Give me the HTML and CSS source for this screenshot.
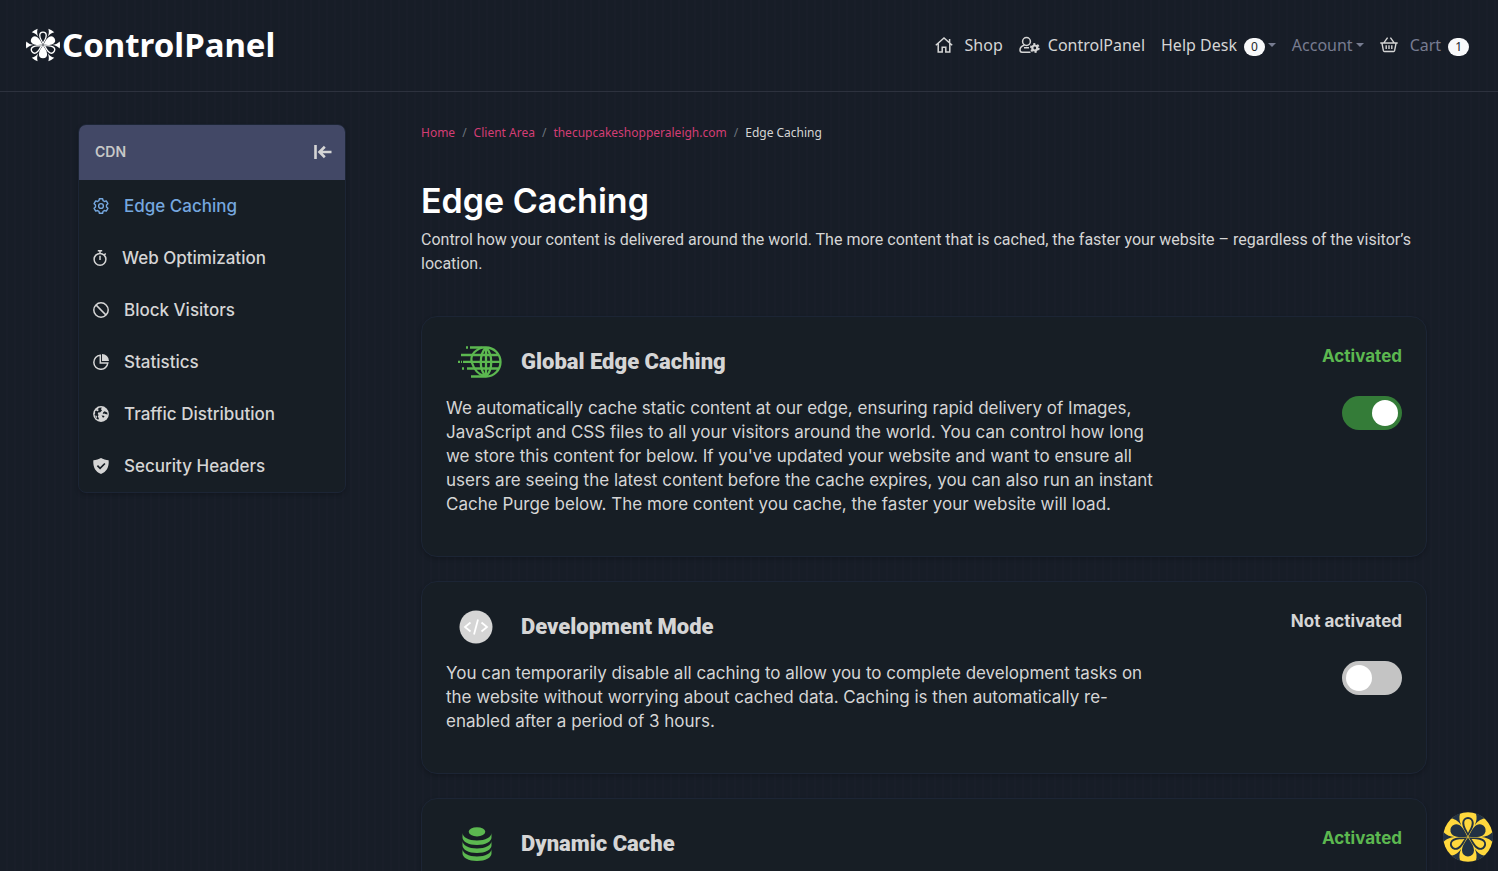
FILE: index.html
```
<!DOCTYPE html>
<html lang="en">

<head>
    <meta charset="UTF-8">
    <meta name="viewport" content="width=device-width, initial-scale=1.0">
    <title>Edge Caching - ControlPanel</title>
    <link rel="stylesheet" href="styles.css">
</head>

<body>
    <!-- Shapes shared by the logo and the help button -->
    <svg width="0" height="0" class="defs" aria-hidden="true">
        <defs>
            <path id="petal" d="M0-1C-4-8-12-17-12-27A12 12 0 0 1 12-27C12-17 4-8 0-1Z" />
            <path id="petalOpen" fill-rule="evenodd" d="M0-1C-3-9-11.500-18-11.500-28A11.500 12 0 0 1 11.500-28C11.500-18 3-9 0-1ZM0-8C-2-14-7.500-20-7.500-28A7.500 8 0 0 1 7.500-28C7.500-20 2-14 0-8Z" />
            <path id="wedge" d="M0-27C-1-36-3-42-10-49A50 50 0 0 1 10-49C3-42 1-36 0-27Z" />
            <g id="flower">
                <use href="#petalOpen" />
                <use href="#petal" transform="rotate(60)" />
                <use href="#petalOpen" transform="rotate(120)" />
                <use href="#petal" transform="rotate(180)" />
                <use href="#petalOpen" transform="rotate(240)" />
                <use href="#petal" transform="rotate(300)" />
                <use href="#wedge" transform="rotate(30)" />
                <use href="#wedge" transform="rotate(90)" />
                <use href="#wedge" transform="rotate(150)" />
                <use href="#wedge" transform="rotate(210)" />
                <use href="#wedge" transform="rotate(270)" />
                <use href="#wedge" transform="rotate(330)" />
            </g>
        </defs>
    </svg>

    <header class="topbar">
        <a class="logo" href="#">
            <svg viewBox="-50 -50 100 100" fill="#fff"><use href="#flower" /></svg>
            <span>ControlPanel</span>
        </a>
        <nav class="topnav">
            <a class="nav_link" href="#">
                <svg class="nav_icon shop_icon" viewBox="0 0 18 18" fill="none" stroke="currentColor" stroke-width="1.5">
                    <path d="M.8 9.300L9 2l8.200 7.300M3.200 7.500V16h4v-4.800h3.600V16h4V7.500M14.600 3v3.800" />
                </svg>
                <span>Shop</span>
            </a>
            <a class="nav_link" href="#">
                <svg class="nav_icon user_icon" viewBox="0 0 21 18">
                    <g fill="none" stroke="currentColor" stroke-width="1.500">
                        <circle cx="7.500" cy="5.500" r="3.900" />
                        <path d="M5.500 9.300C2.500 10 1 12 1 14c0 1.500.8 2.200 2 2.200h8.500M5 11.800h5" />
                        <circle cx="15.800" cy="12" r="2.500" stroke-width="2.200" />
                        <circle cx="15.800" cy="12" r="4" stroke-width="1.800" stroke-dasharray="2.100 2.090" />
                    </g>
                </svg>
                <span>ControlPanel</span>
            </a>
            <a class="nav_link" href="#">Help Desk <span class="badge">0</span><i class="caret"></i></a>
            <a class="nav_link muted" href="#">Account<i class="caret"></i></a>
            <a class="nav_link muted" href="#">
                <svg class="nav_icon cart_icon" viewBox="0 0 18 18" fill="none" stroke="#d5d5d5" stroke-width="1.400">
                    <path d="M.3 7h17.400M2 7.300l1.400 7.400q.2.800 1 .8h9.200q.8 0 1-.8L16 7.300M3.800 6.800L7.600 1.600M14.200 6.800l-3.800-5.200M6.200 9.300v3.700M9 9.300v3.700M11.800 9.300v3.700" />
                </svg>
                <span>Cart</span>
                <span class="badge">1</span>
            </a>
        </nav>
    </header>

    <div class="page">
        <aside class="sidebar">
            <div class="sidebar_head">
                <span>CDN</span>
                <button class="collapse_btn" type="button" aria-label="Collapse menu">
                    <svg viewBox="0 0 18 16" fill="none" stroke="currentColor" stroke-width="2.600">
                        <path d="M1.500 1v14M17.500 8H6M10.800 2.800L5.500 8l5.300 5.200" />
                    </svg>
                </button>
            </div>
            <nav class="menu">
                <a class="menu_item active" href="#">
                    <svg viewBox="0 0 16 16" fill="none" stroke="currentColor" stroke-width="1.400">
                        <path d="M6.400.8h3.200l.5 1.900 1.300.8 1.900-.6 1.600 2.800L13.500 7v2l1.400 1.300-1.600 2.800-1.900-.6-1.300.8-.5 1.900H6.400l-.5-1.900-1.300-.8-1.900.6-1.600-2.800L2.500 9V7L1.100 5.700l1.600-2.800 1.900.6 1.300-.8z" stroke-linejoin="round" />
                        <circle cx="8" cy="8" r="2.400" />
                    </svg>
                    <span>Edge Caching</span>
                </a>
                <a class="menu_item" href="#">
                    <svg class="narrow" viewBox="0 0 14 16" fill="none" stroke="currentColor" stroke-width="1.500">
                        <circle cx="7" cy="9.300" r="5.900" />
                        <path d="M4.800.8h4.400M7 1v2.500M7 5.800v4.200M11.200 5l1.500-1.500" />
                    </svg>
                    <span>Web Optimization</span>
                </a>
                <a class="menu_item" href="#">
                    <svg viewBox="0 0 16 16" fill="none" stroke="currentColor" stroke-width="1.500">
                        <circle cx="8" cy="8" r="7.200" />
                        <path d="M2.900 2.900l10.200 10.200" />
                    </svg>
                    <span>Block Visitors</span>
                </a>
                <a class="menu_item" href="#">
                    <svg viewBox="0 0 16 16" fill="none" stroke="currentColor" stroke-width="1.500">
                        <path d="M7.300 1.300A7 7 0 1 0 14.800 9H7.300z" />
                        <path d="M9 0a7 7 0 0 1 7 7H9z" fill="currentColor" stroke="none" />
                    </svg>
                    <span>Statistics</span>
                </a>
                <a class="menu_item" href="#">
                    <svg viewBox="0 0 16 16">
                        <circle cx="8" cy="8" r="7.900" fill="currentColor" />
                        <path fill="#171e25" d="M6.200 1.700L8.800 1.500 8 3.200l1 1.300-2 2-1.500-.3-.8 1.800 1 1-1 1.300 1.200 2.200-.7 1.300A7 7 0 0 1 1.500 8.500l.7-1.300L2 5.500zM10 6.500l1.500-1.300 2.700 1.300.4 2-2.300-.4-1-.7-1.500.5zM8.500 9.500l2.500.3.500 1-1.500 1z" />
                        <path fill="currentColor" d="M3 4.800l1.800.4 1-1.200-1.200-.9zM2.800 9l1.300 1.700-.5 1.500-1.100-1.500z" />
                    </svg>
                    <span>Traffic Distribution</span>
                </a>
                <a class="menu_item" href="#">
                    <svg viewBox="0 0 16 16">
                        <path fill="currentColor" d="M8 0C6 1.300 3 2 .4 2.200-.2 8 1.500 13.500 8 16c6.500-2.500 8.200-8 7.600-13.800C13 2 10 1.300 8 0z" />
                        <path fill="none" stroke="#171e25" stroke-width="1.700" d="M4.400 7.600l2.700 2.700 4.800-4.800" />
                    </svg>
                    <span>Security Headers</span>
                </a>
            </nav>
        </aside>

        <main class="content">
            <nav class="breadcrumb" aria-label="breadcrumb">
                <a href="#">Home</a>
                <span class="sep">/</span>
                <a href="#">Client Area</a>
                <span class="sep">/</span>
                <a href="#">thecupcakeshopperaleigh.com</a>
                <span class="sep">/</span>
                <span>Edge Caching</span>
            </nav>

            <h1>Edge Caching</h1>
            <p class="intro">Control how your content is delivered around the world. The more content that is cached, the faster your website – regardless of the visitor’s location.</p>

            <section class="card">
                <div class="card_text">
                    <div class="card_head">
                        <svg class="card_icon" viewBox="0 0 44 34" fill="none" stroke="#5cb850" stroke-width="2.300">
                            <path d="M12 2.500h16a14.200 14.200 0 0 1 0 29H13M3 10h38M5 16.800h37M9 23.500h32M28 2.500v29" />
                            <path d="M28 2.500c-7 7-7 22 0 29M28 2.500c7 7 7 22 0 29M24 2.500C15 6 12 12 14 18s5 11 12 13" />
                            <path d="M8 2.500h2M0 16.800h2M3 16.800h1M4 23.500h2" />
                        </svg>
                        <h2>Global Edge Caching</h2>
                    </div>
                    <p>We automatically cache static content at our edge, ensuring rapid delivery of Images, JavaScript and CSS files to all your visitors around the world. You can control how long we store this content for below. If you've updated your website and want to ensure all users are seeing the latest content before the cache expires, you can also run an instant Cache Purge below. The more content you cache, the faster your website will load.</p>
                </div>
                <div class="card_side">
                    <label class="status on" for="globalCache">Activated</label>
                    <input class="switch" type="checkbox" id="globalCache" checked>
                </div>
            </section>

            <section class="card">
                <div class="card_text">
                    <div class="card_head">
                        <svg class="card_icon" viewBox="0 0 44 34">
                            <circle cx="18" cy="17" r="16.500" fill="#d5d5d5" />
                            <path d="M12.500 12.500L7 17l5.500 4.500M23.500 12.500L29 17l-5.500 4.500M20 9.500l-4 15" fill="none" stroke="#fff" stroke-width="1.800" />
                        </svg>
                        <h2>Development Mode</h2>
                    </div>
                    <p>You can temporarily disable all caching to allow you to complete development tasks on the website without worrying about cached data. Caching is then automatically re-enabled after a period of 3 hours.</p>
                </div>
                <div class="card_side">
                    <label class="status" for="devMode">Not activated</label>
                    <input class="switch" type="checkbox" id="devMode">
                </div>
            </section>

            <section class="card">
                <div class="card_text">
                    <div class="card_head">
                        <svg class="card_icon" viewBox="0 0 44 34" fill="#5cb850">
                            <ellipse cx="19" cy="4.800" rx="8.300" ry="4.600" />
                            <path id="disc" d="M4.500 6c0 4 6 7.500 14.500 7.500S33.500 10 33.500 6v4.500c0 4-6 7.500-14.500 7.500S4.500 14.500 4.500 10.500z" />
                            <use href="#disc" y="8" />
                            <use href="#disc" y="16" />
                        </svg>
                        <h2>Dynamic Cache</h2>
                    </div>
                </div>
                <div class="card_side">
                    <label class="status on" for="dynamicCache">Activated</label>
                    <input class="switch" type="checkbox" id="dynamicCache" checked>
                </div>
            </section>
        </main>
    </div>

    <button class="help_btn" type="button" aria-label="Help">
        <svg viewBox="-50 -50 100 100">
            <circle r="49.500" fill="#ffd83d" />
            <g fill="#223244"><use href="#flower" /></g>
        </svg>
    </button>
</body>

</html>
```
FILE: styles.css
```
* {
    box-sizing: border-box;
}

body {
    margin: 0;
    height: 100vh;
    overflow: hidden;
    background: repeating-linear-gradient(90deg, #171d27 0 6px, #191e29 6px 8px);
    color: #d5d5d5;
    font-family: Inter, "Liberation Sans", sans-serif;
    font-size: 17px;
    line-height: 24px;
}

a {
    text-decoration: none;
    color: inherit;
}

.defs {
    position: absolute;
}

/* Top bar */
.topbar {
    display: flex;
    align-items: center;
    justify-content: space-between;
    height: 92px;
    padding: 0 29px 2px 26px;
    border-bottom: 1px solid #2d323e;
    font-family: "Noto Sans", "Open Sans", sans-serif;
    font-size: 16px;
}

.logo {
    display: flex;
    align-items: center;
    gap: 2px;
    color: #fff;
    font-size: 33px;
    font-weight: bold;
    line-height: 40px;
}

.logo svg {
    width: 34px;
    height: 34px;
}

.topnav {
    display: flex;
    align-items: center;
    gap: 16px;
}

.nav_link {
    display: flex;
    align-items: center;
}

.nav_icon {
    width: 18px;
    height: 18px;
    margin-right: 12px;
}

.user_icon {
    width: 21px;
    margin-right: 8px;
}

.muted {
    color: #777c90;
}

.badge {
    margin: 4px 0 0 7px;
    padding: 0 7px;
    border-radius: 9px;
    background: #f8f9fa;
    color: #212529;
    font-size: 12px;
    line-height: 18px;
}

.caret {
    margin-left: 3px;
    border-top: 4px solid #777c90;
    border-left: 4px solid transparent;
    border-right: 4px solid transparent;
}

/* Page columns */
.page {
    display: flex;
    align-items: flex-start;
    gap: 75px;
    padding: 32px 71px 0 78px;
}

.sidebar {
    flex: 0 0 268px;
    border: 1px solid #1c2535;
    border-radius: 8px;
    background: #171e25;
    box-shadow: 0 2px 4px rgba(0, 0, 0, 0.2);
    overflow: hidden;
}

.sidebar_head {
    display: flex;
    align-items: center;
    justify-content: space-between;
    height: 55px;
    padding: 0 13px 1px 16px;
    background: #424866;
    color: #c8c8c8;
    font-size: 14px;
    font-weight: 600;
}

.collapse_btn {
    display: flex;
    padding: 0;
    border: none;
    background: none;
    color: #d5d5d5;
    cursor: pointer;
}

.collapse_btn svg {
    width: 18px;
    height: 16px;
}

.menu_item {
    display: flex;
    align-items: center;
    gap: 15px;
    height: 52px;
    padding: 0 14px 1px;
    font-weight: 500;
}

.menu_item svg {
    width: 16px;
    height: 16px;
}

.menu_item svg.narrow {
    width: 14px;
}

.menu_item.active {
    color: #75a7df;
}

/* Main column */
.content {
    flex: 1;
    min-width: 0;
}

.breadcrumb {
    display: flex;
    gap: 7px;
    font-family: "Noto Sans", "Open Sans", sans-serif;
    font-size: 12px;
    line-height: 18px;
}

.breadcrumb a {
    color: #d33d74;
}

.breadcrumb .sep {
    color: #6c757d;
}

h1 {
    margin: 43px 0 11px;
    color: #fff;
    font-size: 34px;
    font-weight: 600;
    line-height: 32px;
}

.intro {
    margin: 0 0 40px;
    font-family: Roboto, sans-serif;
    font-size: 16px;
}

.card {
    display: flex;
    justify-content: space-between;
    margin-bottom: 24px;
    padding: 24px;
    border: 1px solid #1c2535;
    border-radius: 16px;
    background: #171e25;
    box-shadow: 0 2px 4px rgba(0, 0, 0, 0.2);
}

.card_text {
    flex: 0 1 716px;
}

.card_head {
    display: flex;
    align-items: center;
    gap: 19px;
    height: 42px;
    margin-bottom: 13px;
    padding-left: 12px;
}

.card_icon {
    width: 44px;
    height: 34px;
}

.card h2 {
    margin: 0;
    font-family: Roboto, sans-serif;
    font-size: 22px;
    font-weight: 900;
}

.card p {
    margin: 0 0 16px;
}

.card_side {
    display: flex;
    flex-direction: column;
    align-items: flex-end;
    gap: 28px;
    padding-top: 3px;
}

.status {
    font-weight: 700;
}

.status.on {
    color: #5cb850;
}

.switch {
    appearance: none;
    width: 60px;
    height: 34px;
    margin: 0;
    padding: 4px;
    border-radius: 17px;
    background: #c4c4c4;
    cursor: pointer;
}

.switch::before {
    content: "";
    display: block;
    width: 26px;
    height: 26px;
    border-radius: 50%;
    background: #fff;
}

.switch:checked {
    background: #347c38;
}

.switch:checked::before {
    margin-left: auto;
}

/* Floating help button */
.help_btn {
    position: fixed;
    right: 5px;
    bottom: 9px;
    width: 50px;
    height: 50px;
    padding: 0;
    border: none;
    border-radius: 50%;
    background: none;
    cursor: pointer;
}

.help_btn svg {
    display: block;
}
```
